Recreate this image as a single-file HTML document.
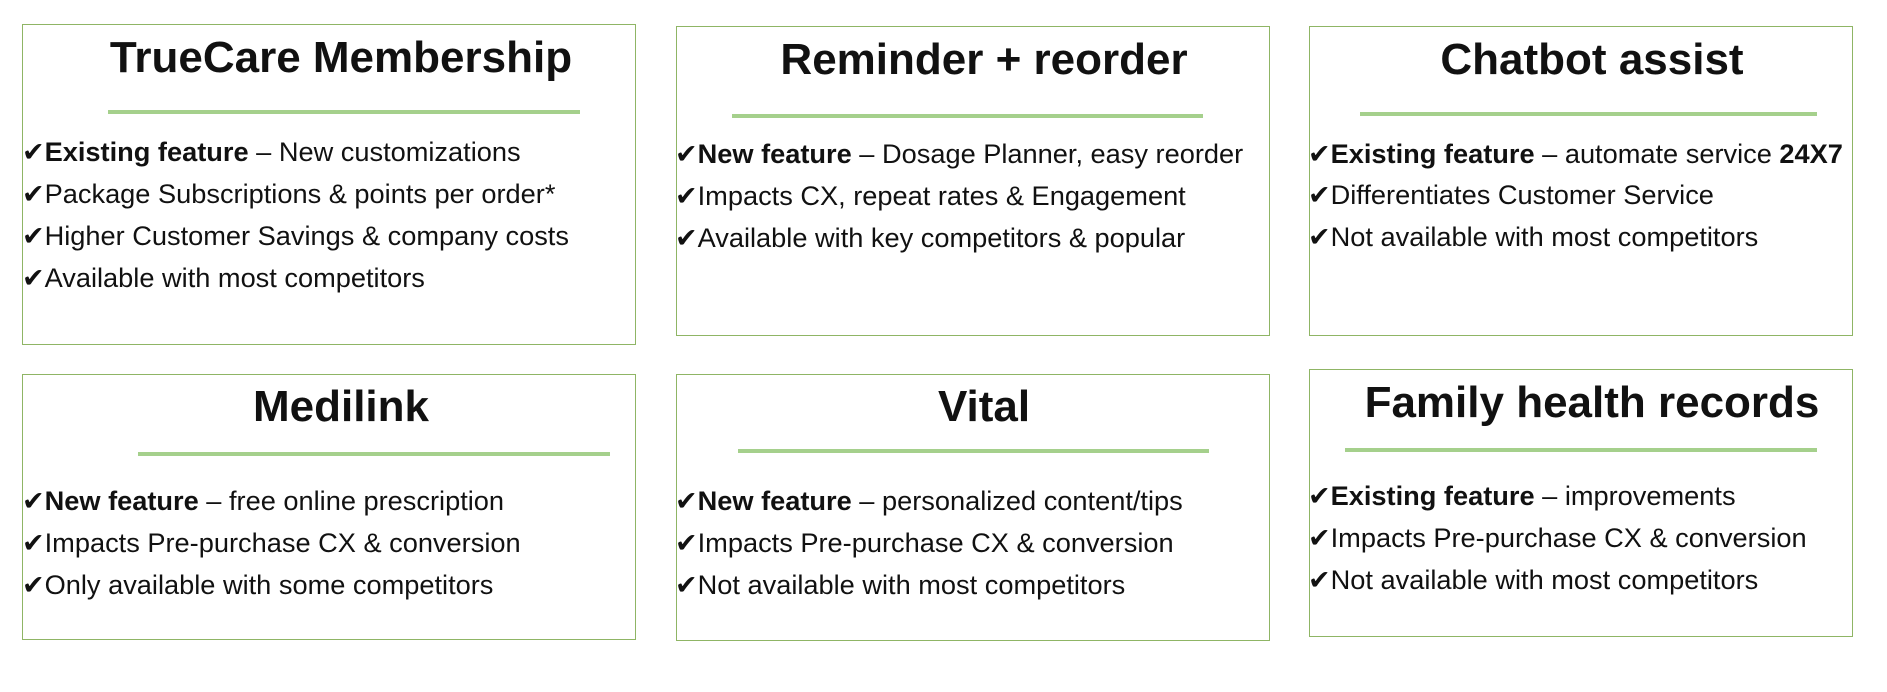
<!DOCTYPE html>
<html><head><meta charset="utf-8"><style>
body{margin:0;width:1887px;height:692px;background:#fff;position:relative;overflow:hidden;font-family:"Liberation Sans",sans-serif;color:#111}
.b{position:absolute;border:1.5px solid #8fb565;box-sizing:border-box}
.u{position:absolute;height:4px;background:#a5d08c}
.t{position:absolute;font-weight:bold;font-size:44px;line-height:50px;text-align:center;width:700px;margin-left:-350px;white-space:nowrap}
.l{position:absolute;font-size:27.2px;line-height:34px;white-space:nowrap}
.l:before{content:"✔";font-family:"DejaVu Sans",sans-serif;font-size:27px;font-weight:bold;margin-right:0px}
.l b{font-weight:bold}
</style></head><body>
<div class="b" style="left:22px;top:24px;width:614px;height:321px"></div>
<div class="b" style="left:676px;top:26px;width:594px;height:310px"></div>
<div class="b" style="left:1309px;top:26px;width:544px;height:310px"></div>
<div class="b" style="left:22px;top:374px;width:614px;height:266px"></div>
<div class="b" style="left:676px;top:374px;width:594px;height:267px"></div>
<div class="b" style="left:1309px;top:369px;width:544px;height:268px"></div>

<div class="u" style="left:108px;top:110px;width:472px"></div>
<div class="u" style="left:732px;top:114px;width:471px"></div>
<div class="u" style="left:1360px;top:112px;width:457px"></div>
<div class="u" style="left:138px;top:452px;width:472px"></div>
<div class="u" style="left:738px;top:449px;width:471px"></div>
<div class="u" style="left:1345px;top:448px;width:472px"></div>

<div class="t" style="left:341px;top:33px">TrueCare Membership</div>
<div class="t" style="left:984px;top:35px">Reminder + reorder</div>
<div class="t" style="left:1592px;top:35px">Chatbot assist</div>
<div class="t" style="left:341px;top:382px">Medilink</div>
<div class="t" style="left:984px;top:382px">Vital</div>
<div class="t" style="left:1592px;top:378px">Family health records</div>

<div class="l" style="left:22px;top:135px"><b>Existing feature</b> – New customizations</div>
<div class="l" style="left:22px;top:177px">Package Subscriptions &amp; points per order*</div>
<div class="l" style="left:22px;top:219px">Higher Customer Savings &amp; company costs</div>
<div class="l" style="left:22px;top:261px">Available with most competitors</div>

<div class="l" style="left:675px;top:137px"><b>New feature</b> – Dosage Planner, easy reorder</div>
<div class="l" style="left:675px;top:179px">Impacts CX, repeat rates &amp; Engagement</div>
<div class="l" style="left:675px;top:221px">Available with key competitors &amp; popular</div>

<div class="l" style="left:1308px;top:137px"><b>Existing feature</b> – automate service <b>24X7</b></div>
<div class="l" style="left:1308px;top:178px">Differentiates Customer Service</div>
<div class="l" style="left:1308px;top:220px">Not available with most competitors</div>

<div class="l" style="left:22px;top:484px"><b>New feature</b> – free online prescription</div>
<div class="l" style="left:22px;top:526px">Impacts Pre-purchase CX &amp; conversion</div>
<div class="l" style="left:22px;top:568px">Only available with some competitors</div>

<div class="l" style="left:675px;top:484px"><b>New feature</b> – personalized content/tips</div>
<div class="l" style="left:675px;top:526px">Impacts Pre-purchase CX &amp; conversion</div>
<div class="l" style="left:675px;top:568px">Not available with most competitors</div>

<div class="l" style="left:1308px;top:479px"><b>Existing feature</b> – improvements</div>
<div class="l" style="left:1308px;top:521px">Impacts Pre-purchase CX &amp; conversion</div>
<div class="l" style="left:1308px;top:563px">Not available with most competitors</div>
</body></html>
